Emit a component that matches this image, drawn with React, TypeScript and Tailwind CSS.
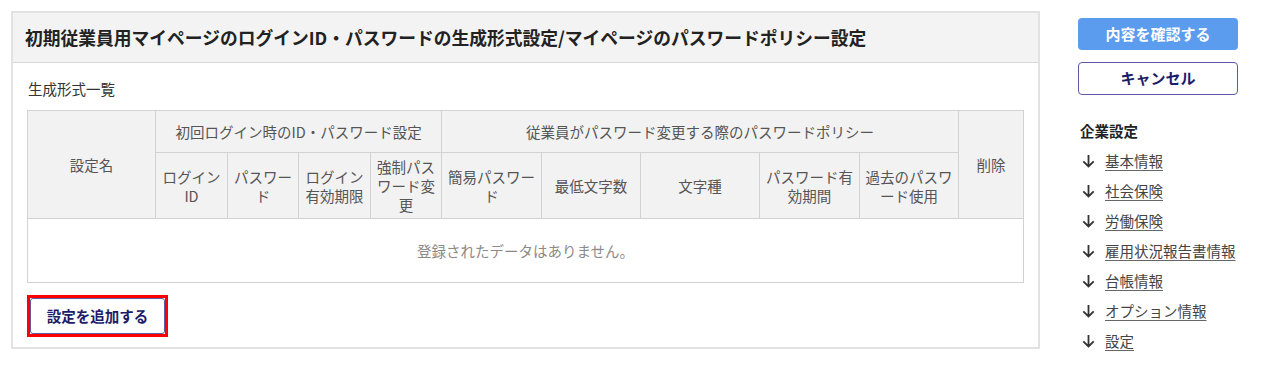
import React from "react";

const font = { fontFamily: '"Noto Sans CJK JP", "Noto Sans", sans-serif' };

function ArrowDown() {
  return (
    <svg width="13" height="14" viewBox="0 0 13 14" className="shrink-0">
      <path d="M6.5 1 V12.5 M1.3 7.3 L6.5 12.5 L11.7 7.3" fill="none" stroke="#333" strokeWidth="1.8" />
    </svg>
  );
}

const links = ["基本情報", "社会保険", "労働保険", "雇用状況報告書情報", "台帳情報", "オプション情報", "設定"];

export default function App() {
  const th = "border border-[#d2d2d2] bg-[#f2f2f2] font-normal text-[#555] text-[14.5px] leading-[19px] text-center align-middle px-1";
  return (
    <div style={font} className="flex items-start gap-[38px] pt-[11px] pl-[11px] bg-white min-h-[365px]">
      <section className="w-[1029px] border-2 border-[#e2e2e2] bg-white">
        <div className="h-[50px] bg-[#f3f3f3] border-b border-[#d6d6d6] flex items-center pl-[12px]">
          <h1 className="text-[17.75px] font-bold text-[#222] leading-none">
            初期従業員用マイページのログインID・パスワードの生成形式設定/マイページのパスワードポリシー設定
          </h1>
        </div>
        <div className="px-[14px] pt-[16px] pb-[10px]">
          <p className="text-[14.5px] leading-[20px] text-[#333] pl-[1px]">生成形式一覧</p>
          <table className="mt-[11px] w-[996px] table-fixed border-collapse">
            <colgroup>
              <col className="w-[128px]" />
              <col className="w-[72px]" />
              <col className="w-[71px]" />
              <col className="w-[72px]" />
              <col className="w-[71px]" />
              <col className="w-[100px]" />
              <col className="w-[99px]" />
              <col className="w-[119px]" />
              <col className="w-[100px]" />
              <col className="w-[99px]" />
              <col className="w-[65px]" />
            </colgroup>
            <thead>
              <tr className="h-[42px]">
                <th rowSpan={2} className={th}>設定名</th>
                <th colSpan={4} className={th}>初回ログイン時のID・パスワード設定</th>
                <th colSpan={5} className={th}>従業員がパスワード変更する際のパスワードポリシー</th>
                <th rowSpan={2} className={th}>削除</th>
              </tr>
              <tr className="h-[66px]">
                <th className={th}>ログイン<br />ID</th>
                <th className={th}>パスワー<br />ド</th>
                <th className={th}>ログイン<br />有効期限</th>
                <th className={th}>強制パス<br />ワード変<br />更</th>
                <th className={th}>簡易パスワー<br />ド</th>
                <th className={th}>最低文字数</th>
                <th className={th}>文字種</th>
                <th className={th}>パスワード有<br />効期間</th>
                <th className={th}>過去のパスワ<br />ード使用</th>
              </tr>
            </thead>
            <tbody>
              <tr className="h-[64px]">
                <td colSpan={11} className="border border-[#d2d2d2] text-center text-[14.5px] text-[#8a8a8a] align-middle">
                  登録されたデータはありません。
                </td>
              </tr>
            </tbody>
          </table>
          <div className="mt-[12px] inline-block border-[3px] border-[#ff0000]">
            <button className="w-[135px] h-[36px] bg-white border border-[#5a5aa6] rounded-[3px] text-[14.5px] font-bold text-[#1c1c6a] flex items-center justify-center">
              設定を追加する
            </button>
          </div>
        </div>
      </section>
      <aside className="w-[160px] pt-[7px]">
        <button className="w-[160px] h-[32px] rounded-[4px] bg-[#5b9cef] text-white font-bold text-[15px] flex items-center justify-center">
          内容を確認する
        </button>
        <button className="mt-[12px] w-[160px] h-[33px] rounded-[4px] bg-white border border-[#5a5aa6] text-[#1c1c6a] font-bold text-[15px] flex items-center justify-center">
          キャンセル
        </button>
        <div className="mt-[21px]">
          <div className="h-[30px] flex items-center pl-[2px] text-[14.5px] font-bold text-[#222]">企業設定</div>
          {links.map((l) => (
            <div key={l} className="h-[30px] flex items-center pl-[4px] gap-[10px]">
              <ArrowDown />
              <a className="text-[14.5px] text-[#444] underline underline-offset-[3px] decoration-[#666]">{l}</a>
            </div>
          ))}
        </div>
      </aside>
    </div>
  );
}
